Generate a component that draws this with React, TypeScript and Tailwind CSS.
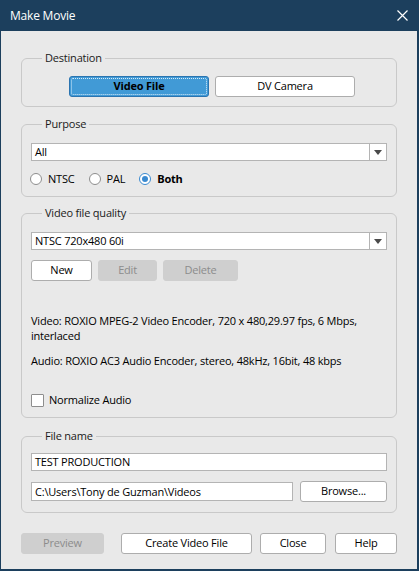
import React from 'react';

function Btn({ label, w, disabled, className = '' }: { label: string; w: string; disabled?: boolean; className?: string }) {
  return (
    <div
      className={`${w} h-[21px] flex items-center justify-center rounded-[3px] border text-[11px] ${
        disabled
          ? 'bg-[#cfcfcf] border-[#cfcfcf] text-[#8c8c8c]'
          : 'bg-white border-[#adadad] text-black'
      } ${className}`}
    >
      {label}
    </div>
  );
}

function Select({ value }: { value: string }) {
  return (
    <div className="h-[18px] flex border border-[#b4b4b4] bg-white">
      <div className="flex-1 pl-[3px] text-[11px] leading-[16px] text-black">{value}</div>
      <div className="w-[17px] border-l border-[#b4b4b4] flex items-center justify-center">
        <svg width="8" height="5" viewBox="0 0 8 5">
          <path d="M0 0h8L4 5z" fill="#4a4a4a" />
        </svg>
      </div>
    </div>
  );
}

function Radio({ label, checked }: { label: string; checked?: boolean }) {
  return (
    <div className="flex items-center gap-[6px]">
      <div
        className={`w-[12px] h-[12px] rounded-full border bg-white flex items-center justify-center ${
          checked ? 'border-[#3a8ad0]' : 'border-[#8e8e8e]'
        }`}
      >
        {checked && <div className="w-[6px] h-[6px] rounded-full bg-[#3a8ad0]" />}
      </div>
      <span className={`text-[11px] ${checked ? 'font-bold' : ''}`}>{label}</span>
    </div>
  );
}

function Group({ title, className = '', children }: { title: string; className?: string; children: React.ReactNode }) {
  return (
    <fieldset className={`border border-[#c9c9c9] rounded-[6px] px-[9px] ${className}`}>
      <legend className="ml-[11px] px-[3px] text-[11px] leading-[16px] text-[#1a1a1a]">{title}</legend>
      {children}
    </fieldset>
  );
}

export default function App() {
  return (
    <div
      className="w-[419px] h-[571px] flex flex-col tracking-[-0.2px]"
      style={{ fontFamily: '"Open Sans", "Noto Sans", sans-serif' }}
    >
      {/* Title bar */}
      <div className="h-[31px] bg-[#1c3f5d] flex items-center justify-between pl-[10px] pr-[11px]">
        <span className="text-white text-[12px]">Make Movie</span>
        <svg width="11" height="11" viewBox="0 0 11 11">
          <path d="M0.5 0.5l10 10M10.5 0.5l-10 10" stroke="#fff" strokeWidth="1.2" />
        </svg>
      </div>

      {/* Body */}
      <div className="flex-1 bg-[#e9e9e9] border-l border-r-2 border-b-2 border-[#1c3f5d] px-[20px] flex flex-col text-black">
        {/* Destination */}
        <Group title="Destination" className="mt-[19px] pt-[10px] pb-[9px]">
          <div className="flex gap-[6px] pl-[38px]">
            <div className="w-[140px] h-[21px] rounded-[3px] border border-[#2b74b0] bg-[#419ad6] p-[1px]">
              <div className="w-full h-full border border-dotted border-[#d8ecf9] rounded-[2px] flex items-center justify-center text-[11px] font-bold">
                Video File
              </div>
            </div>
            <Btn label="DV Camera" w="w-[140px]" />
          </div>
        </Group>

        {/* Purpose */}
        <Group title="Purpose" className="mt-[9px] pt-[11px] pb-[8px]">
          <Select value="All" />
          <div className="mt-[9px] h-[18px] flex items-center gap-[14px] -ml-[1px]">
            <Radio label="NTSC" />
            <Radio label="PAL" />
            <Radio label="Both" checked />
          </div>
        </Group>

        {/* Video file quality */}
        <Group title="Video file quality" className="mt-[8px] pt-[11px] pb-[10px]">
          <Select value="NTSC 720x480 60i" />
          <div className="mt-[10px] flex gap-[6px]">
            <Btn label="New" w="w-[61px]" />
            <Btn label="Edit" w="w-[59px]" disabled />
            <Btn label="Delete" w="w-[75px]" disabled />
          </div>
          <p className="mt-[32px] text-[11px] leading-[15px]">
            Video: ROXIO MPEG-2 Video Encoder, 720 x 480,29.97 fps, 6 Mbps,
            <br />
            interlaced
          </p>
          <p className="mt-[10px] text-[11px] leading-[15px]">
            Audio: ROXIO AC3 Audio Encoder, stereo, 48kHz, 16bit, 48 kbps
          </p>
          <div className="mt-[25px] h-[14px] flex items-center gap-[5px]">
            <div className="w-[13px] h-[13px] border border-[#8e8e8e] bg-white rounded-[1px]" />
            <span className="text-[11px]">Normalize Audio</span>
          </div>
        </Group>

        {/* File name */}
        <Group title="File name" className="mt-[10px] pt-[9px] pb-[10px]">
          <div className="h-[18px] border border-[#b4b4b4] bg-white pl-[3px] text-[11px] leading-[16px]">
            TEST PRODUCTION
          </div>
          <div className="mt-[10px] flex items-center gap-[7px]">
            <div className="w-[262px] h-[19px] border border-[#b4b4b4] bg-white pl-[3px] text-[11px] leading-[17px]">
              C:\Users\Tony de Guzman\Videos
            </div>
            <Btn label="Browse..." w="w-[87px]" className="h-[20px]" />
          </div>
        </Group>

        {/* Bottom buttons */}
        <div className="mt-[20px] flex">
          <Btn label="Preview" w="w-[83px]" disabled />
          <Btn label="Create Video File" w="w-[131px]" className="ml-[17px]" />
          <Btn label="Close" w="w-[66px]" className="ml-[8px]" />
          <Btn label="Help" w="w-[62px]" className="ml-[9px]" />
        </div>
      </div>
    </div>
  );
}
